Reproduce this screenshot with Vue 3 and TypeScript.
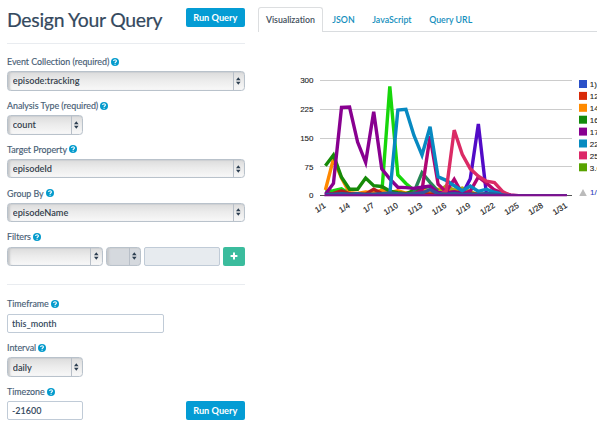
<script setup lang="ts">
import { ref } from 'vue'

interface Field { label: string; value: string; kind: 'select' | 'input'; size: string }
interface Series { color: string; values: number[] }

const mainFields = ref<Field[]>([
  { label: 'Event Collection (required)', value: 'episode:tracking', kind: 'select', size: 'full' },
  { label: 'Analysis Type (required)', value: 'count', kind: 'select', size: 'short' },
  { label: 'Target Property', value: 'episodeId', kind: 'select', size: 'full' },
  { label: 'Group By', value: 'episodeName', kind: 'select', size: 'full' },
])
const timeFields = ref<Field[]>([
  { label: 'Timeframe', value: 'this_month', kind: 'input', size: 'medium' },
  { label: 'Interval', value: 'daily', kind: 'select', size: 'short' },
  { label: 'Timezone', value: '-21600', kind: 'input', size: 'short' },
])
const tabs = ['Visualization', 'JSON', 'JavaScript', 'Query URL']
const activeTab = ref('Visualization')

const ticks = [300, 225, 150, 75, 0]
const days = [1, 4, 7, 10, 13, 16, 19, 22, 25, 28, 31]
const dayX = (d: number) => 67.4 + (d - 1) * 8.05
const valY = (v: number) => 135.7 - v * 0.3835
const pad = (v: number[], start = 1) => [
  ...Array(start - 1).fill(0), ...v, ...Array(32 - start - v.length).fill(0),
]
const series: Series[] = [
  { color: '#17d60b', values: pad([12, 13, 18, 5, 3, 4, 3, 5, 285, 54, 32, 14, 8, 10, 6, 4, 3]) },
  { color: '#ff8800', values: pad([15, 96, 46, 8, 6, 10, 8, 14, 8, 13, 7, 8, 14, 10, 17, 12, 15, 8, 5, 4]) },
  { color: '#168a08', values: pad([78, 106, 48, 17, 17, 46, 26, 24, 12, 8, 5, 14, 21, 24, 10, 7, 4, 3]) },
  { color: '#278656', values: pad([9, 60, 35, 12, 10, 5, 4], 12) },
  { color: '#aaaa11', values: pad([3, 8, 26, 14, 20, 10, 3, 4, 7, 3], 14) },
  { color: '#b31c20', values: pad([4, 6, 13, 5, 4, 4, 17, 6, 4, 5, 4, 5, 6, 4, 5, 7, 10, 8, 5, 4, 3]) },
  { color: '#520bc7', values: pad([4, 44, 187, 5, 3], 18) },
  { color: '#b00572', values: pad([5, 14, 155, 30, 10, 43, 5, 12, 49, 33, 15, 7, 2], 12) },
  { color: '#880090', values: pad([4, 32, 230, 231, 140, 87, 219, 70, 44, 22, 21, 19, 22, 25, 8, 8, 10, 5, 3]) },
  { color: '#0789c1', values: pad([4, 223, 225, 157, 106, 180, 49, 40, 26, 13, 25, 11, 17, 9, 4], 9) },
  { color: '#db2b65', values: pad([12, 171, 108, 70, 51, 38, 34, 11], 16) },
  { color: '#31559b', values: pad([3, 4, 5, 4, 5, 3, 4, 5, 7, 5, 4, 5, 7, 16, 5, 4, 5, 3, 4, 3, 6, 4, 2]) },
]
const path = (s: Series) => s.values.map((v, i) => `${dayX(i + 1).toFixed(2)},${valY(v).toFixed(2)}`).join(' ')
const legend = [
  ['#2a50c8', '1)'], ['#d82a08', '12'], ['#ff8a00', '14'], ['#128a0c', '16'],
  ['#880090', '17'], ['#078bc0', '22'], ['#dc2868', '25'], ['#58a300', '3.6'],
]
</script>

<template>
  <main class="page">
    <form class="query" @submit.prevent>
      <header class="heading">
        <h1>Design Your Query</h1>
        <button class="run">Run Query</button>
      </header>
      <section class="fields">
        <div v-for="f in mainFields" :key="f.label" class="field">
          <label>{{ f.label }} <svg class="help" viewBox="0 0 16 16"><circle cx="8" cy="8" r="8" /><path d="M5.2 6.2C5.2 2.6 11 2.8 10.8 6.1C10.7 8 8.1 8 8.1 10M8.1 11.4V13.5" /></svg></label>
          <div class="select" :class="f.size"><select v-model="f.value"><option>{{ f.value }}</option></select><svg class="arrows" viewBox="0 0 5 8"><path d="M0 3.2L2.5 0L5 3.2ZM0 4.8H5L2.5 8Z" /></svg></div>
        </div>
        <div class="field">
          <label>Filters <svg class="help" viewBox="0 0 16 16"><circle cx="8" cy="8" r="8" /><path d="M5.2 6.2C5.2 2.6 11 2.8 10.8 6.1C10.7 8 8.1 8 8.1 10M8.1 11.4V13.5" /></svg></label>
          <div class="filters">
            <div class="select property"><select></select><svg class="arrows" viewBox="0 0 5 8"><path d="M0 3.2L2.5 0L5 3.2ZM0 4.8H5L2.5 8Z" /></svg></div>
            <div class="select operator"><select disabled></select><svg class="arrows" viewBox="0 0 5 8"><path d="M0 3.2L2.5 0L5 3.2ZM0 4.8H5L2.5 8Z" /></svg></div>
            <input class="filter-value" disabled />
            <button class="add"><svg viewBox="0 0 8 8"><path d="M4 .6V7.4M.6 4H7.4" /></svg></button>
          </div>
        </div>
      </section>
      <section class="fields time">
        <div v-for="f in timeFields" :key="f.label" class="field">
          <label>{{ f.label }} <svg class="help" viewBox="0 0 16 16"><circle cx="8" cy="8" r="8" /><path d="M5.2 6.2C5.2 2.6 11 2.8 10.8 6.1C10.7 8 8.1 8 8.1 10M8.1 11.4V13.5" /></svg></label>
          <div class="control-row">
            <div v-if="f.kind === 'select'" class="select" :class="f.size"><select v-model="f.value"><option>{{ f.value }}</option></select><svg class="arrows" viewBox="0 0 5 8"><path d="M0 3.2L2.5 0L5 3.2ZM0 4.8H5L2.5 8Z" /></svg></div>
            <input v-else v-model="f.value" :class="f.size" />
            <button v-if="f.label === 'Timezone'" class="run">Run Query</button>
          </div>
        </div>
      </section>
    </form>
    <section class="results">
      <nav class="tabs">
        <a v-for="t in tabs" :key="t" :class="{ active: t === activeTab }" @click="activeTab = t">{{ t }}</a>
      </nav>
      <svg class="chart" width="339" height="160" viewBox="0 0 339 160">
        <defs><clipPath id="plot"><rect x="62" y="15" width="252" height="121" /></clipPath></defs>
        <g v-for="t in ticks" :key="t">
          <rect x="62" :y="Math.round(valY(t) - .5)" width="252" height="1" :fill="t ? '#ccc' : '#555'" />
          <text class="axis" x="55.5" :y="valY(t) + 2.7" text-anchor="end">{{ t }}</text>
        </g>
        <g clip-path="url(#plot)">
          <polyline v-for="s in series" :key="s.color" :points="path(s)" :stroke="s.color" class="line" />
        </g>
        <rect :x="dayX(1) - 1" y="134.2" :width="dayX(31) - dayX(1) + 1" height="2.1" fill="#80108f" />
        <text v-for="d in days" :key="d" class="day" text-anchor="end" :transform="`translate(${dayX(d) + 1} 147) rotate(-32)`">1/{{ d }}</text>
        <g v-for="(item, i) in legend" :key="item[1]">
          <rect x="321" :y="20 + i * 11.9" width="8" height="8" :fill="item[0]" />
          <text class="axis" x="331.8" :y="27.2 + i * 11.9">{{ item[1] }}</text>
        </g>
        <path d="M321.2 136L325 129L328.8 136Z" fill="#bbb" />
        <text class="axis pager" x="332" y="135">1/5</text>
      </svg>
    </section>
  </main>
</template>

<style>
body { margin: 0; background: #fff; overflow: hidden; }
</style>
<style scoped>
* { box-sizing: border-box; }
.page { display: flex; width: 600px; height: 425px; padding: 7px 3px 0 7px; gap: 13px; font: 9px/12px Lato, "Liberation Sans", sans-serif; color: #486076; }
.query { width: 238px; flex: none; }
.heading { display: flex; justify-content: space-between; align-items: flex-start; height: 37px; border-bottom: 1px solid #e9ecf0; }
h1 { margin: 0; font: 400 19.4px/25px Lato, sans-serif; letter-spacing: -.27px; color: #34495e; -webkit-text-stroke: .2px #34495e; white-space: nowrap; }
button { border: 0; padding: 0; color: #fff; }
.run { width: 59.5px; height: 19px; border-radius: 2px; background: #049cd4; font: 700 9.2px/19px Lato, sans-serif; }
.heading .run { margin-top: 1px; }
.fields { display: flex; flex-direction: column; gap: 12.5px; padding-top: 12px; }
.field { display: flex; flex-direction: column; gap: 3.2px; height: 31.35px; }
label { display: flex; align-items: center; gap: 2px; height: 12px; flex: none; font-size: 8.9px; letter-spacing: -.03px; -webkit-text-stroke: .15px #486076; }
.help { width: 8px; height: 8px; flex: none; margin-top: -.5px; }
.help circle { fill: #049bcd; }
.help path { fill: none; stroke: #fff; stroke-width: 2.3; }
.select { display: flex; align-items: center; flex: none; height: 19.5px; border: 1px solid #b9c2cb; border-radius: 3.5px; background: linear-gradient(#dcdcdc, #ebebeb 45%, #f8f8f8); box-shadow: inset 3px 0 2px -1px #c6c8ca, inset 0 1px 1px #cfd1d3; }
.select select { flex: 1; min-width: 0; height: 100%; appearance: none; border: 0; border-right: 1px solid #b8bfc8; border-radius: 0; background: transparent; padding: 0 0 0 4.8px; outline: 0; font: 600 9.2px Lato, sans-serif; color: #34404c; opacity: 1; }
.arrows { width: 4.6px; height: 8px; flex: none; margin: 0 3px 0 2.7px; fill: #2c3e50; }
.full { width: 238px; }
.short { width: 76px; }
.medium { width: 157px; }
.filters { display: flex; gap: 3px; }
.property { width: 95.5px; }
.select.operator { width: 35.5px; background: #d5d9de; }
input { height: 19px; padding: 0 4px; border: 1px solid #c0cbd7; border-radius: 2px; outline: 0; background: #fff; font: 600 9px Lato, sans-serif; color: #34495e; }
.filter-value { width: 76px; background: #e7ebef; }
.add { display: flex; align-items: center; justify-content: center; width: 23px; height: 19px; border-radius: 2px; background: #3bbc9d; }
.add svg { width: 8px; height: 8px; stroke: #fff; stroke-width: 2; }
.time { margin-top: 21.7px; padding-top: 13px; border-top: 1px solid #e9ecf0; }
.control-row { display: flex; justify-content: space-between; align-items: flex-start; }
.results { width: 339px; overflow: hidden; }
.tabs { display: flex; height: 25px; border-bottom: 1px solid #d9dcdf; }
.tabs a { height: 25px; padding: 6.5px 8.8px 0; font-size: 8.8px; font-weight: 600; color: #168fbd; white-space: nowrap; }
.tabs a.active { width: 65px; padding: 5.5px 0 0 7px; margin-right: .5px; border: 1px solid #dcdee0; border-bottom: 0; border-radius: 3px 3px 0 0; background: #fff; color: #43505c; letter-spacing: -.05px; }
.chart { display: block; margin-top: 28px; }
.line { fill: none; stroke-width: 3.4; }
.axis { font: 8px "Liberation Sans", Arial, sans-serif; fill: #222; stroke: #222; stroke-width: .1px; }
.day { font: 8px "Liberation Sans", Arial, sans-serif; fill: #222; stroke: #222; stroke-width: .15px; }
.pager { fill: #2d3fc0; stroke: #2d3fc0; }
</style>
